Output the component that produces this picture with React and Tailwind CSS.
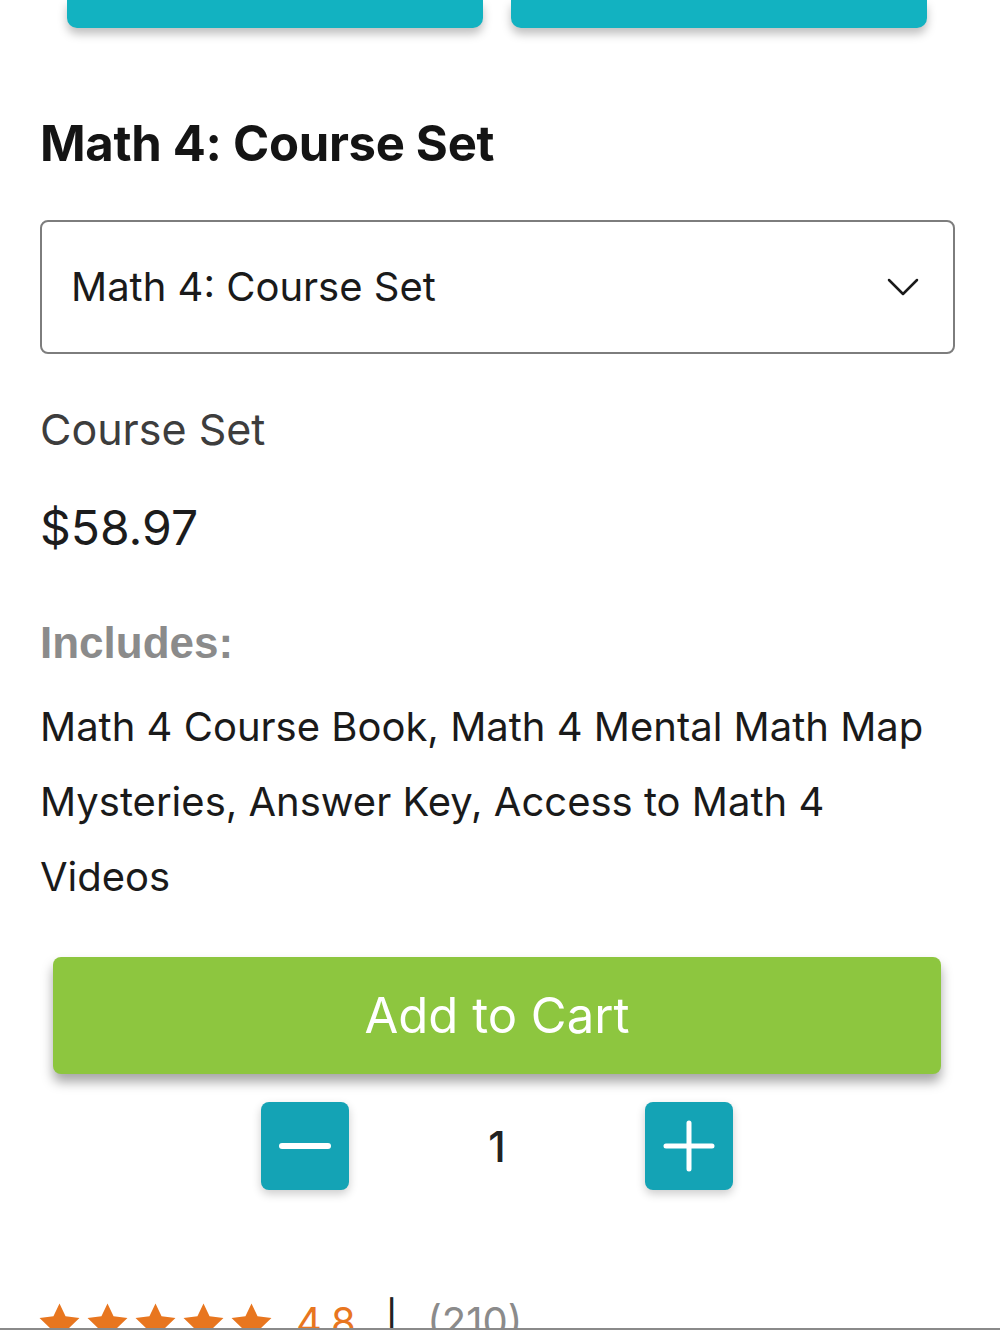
import React, { useState } from 'react';

const font = { fontFamily: 'Inter, "Noto Sans", sans-serif' };

export default function App() {
  const [qty, setQty] = useState(1);

  return (
    <div className="relative w-[1000px] h-[1330px] overflow-hidden bg-white text-[#1a1a1a]" style={font}>
      {/* top tab buttons (cut off) */}
      <div className="flex gap-[28px] px-[67px]">
        <button className="w-[416px] h-[28px] bg-[#12b2c1] rounded-b-[10px] shadow-[0_6px_10px_rgba(0,0,0,0.25)]" />
        <button className="w-[416px] h-[28px] bg-[#12b2c1] rounded-b-[10px] shadow-[0_6px_10px_rgba(0,0,0,0.25)]" />
      </div>

      <div className="pl-[40px] pr-[45px]">
        <h1 className="mt-[86px] text-[49px] leading-[60px] font-bold tracking-[-0.3px] text-[#141414]">Math 4: Course Set</h1>

        <div className="mt-[46px] h-[134px] border-2 border-[#7d7d7d] rounded-[8px] flex items-center justify-between pl-[29px] pr-[34px]">
          <span className="text-[40px] text-[#1a1a1a]">Math 4: Course Set</span>
          <svg width="32" height="20" viewBox="0 0 32 20" fill="none" stroke="#1a1a1a" strokeWidth="2.5" strokeLinecap="round" strokeLinejoin="round">
            <path d="M2 3 L16 17 L30 3" />
          </svg>
        </div>

        <div className="mt-[50px] text-[43px] leading-[50px] text-[#3d3d3d]">Course Set</div>
        <div className="mt-[46px] text-[48px] leading-[56px] text-[#1c1c1c]">$58.97</div>

        <div className="mt-[61px] text-[44px] leading-[52px] font-bold text-[#8b8b8b]" style={{ fontFamily: '"Liberation Sans", Arial, sans-serif' }}>Includes:</div>

        <p className="mt-[20px] text-[40px] leading-[75px] text-[#1a1a1a]">
          Math 4 Course Book, Math 4 Mental Math Map Mysteries, Answer Key, Access to Math 4 Videos
        </p>
      </div>

      <div className="pl-[53px] pr-[59px] mt-[43px]">
        <button className="w-full h-[117px] bg-[#8dc63f] rounded-[8px] text-white text-[49px] shadow-[0_8px_12px_rgba(0,0,0,0.35)]">
          Add to Cart
        </button>
      </div>

      <div className="mt-[28px] pl-[53px] pr-[59px] flex items-center justify-center">
        <button onClick={() => setQty(Math.max(1, qty - 1))} className="w-[88px] h-[88px] bg-[#14a3b5] rounded-[8px] flex items-center justify-center shadow-[0_4px_10px_rgba(0,0,0,0.2)]">
          <svg width="52" height="52" viewBox="0 0 52 52"><path d="M3 26 H49" stroke="white" strokeWidth="6" strokeLinecap="round" /></svg>
        </button>
        <span className="w-[296px] text-center text-[42px] font-medium text-[#222]">{qty}</span>
        <button onClick={() => setQty(qty + 1)} className="w-[88px] h-[88px] bg-[#14a3b5] rounded-[8px] flex items-center justify-center shadow-[0_4px_10px_rgba(0,0,0,0.2)]">
          <svg width="52" height="52" viewBox="0 0 52 52"><path d="M3 26 H49 M26 3 V49" stroke="white" strokeWidth="5" strokeLinecap="round" /></svg>
        </button>
      </div>

      <div className="mt-[102px] pl-[38px] flex items-center gap-[5px]">
        {[0, 1, 2, 3, 4].map(i => (
          <svg key={i} width="43" height="41" viewBox="0 0 24 23"><path d="M12 0.8l3.4 7.2 7.8 1-5.7 5.4 1.5 7.8L12 18.4l-7 3.8 1.5-7.8L0.8 9l7.8-1z" fill="#e8761f" /></svg>
        ))}
        <span className="ml-[18px] text-[40px] text-[#e8761f]">4.8</span>
        <span className="ml-[24px] text-[40px] text-[#222]">|</span>
        <span className="ml-[24px] text-[40px] text-[#8b8b8b]">(210)</span>
      </div>

      <div className="absolute left-0 right-0 bottom-0 h-[2px] bg-[#8a8a8a]" />
    </div>
  );
}
